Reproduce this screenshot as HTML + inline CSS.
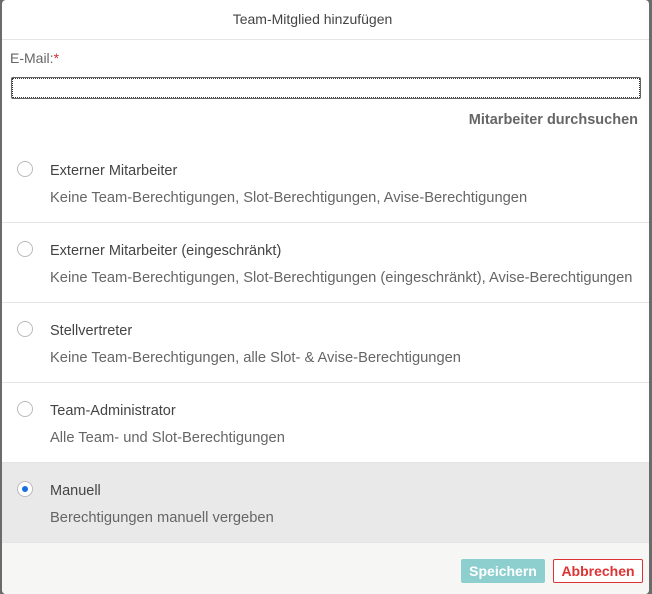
<!DOCTYPE html><html><head><style>
body{margin:0;width:652px;height:594px;background:#6b6b6b;font-family:"Liberation Sans",sans-serif;overflow:hidden}
.d{position:absolute;left:2px;top:0;width:647px;height:594px;background:#fff;border-radius:4px;overflow:hidden}
.t{position:absolute;top:0;left:0;right:0;height:39px;border-bottom:1px solid #e4e4e4;text-align:center;line-height:39px;font-size:14px;color:#444;padding-right:26px}
.lbl{position:absolute;left:8px;top:50px;font-size:14px;color:#666}
.lbl b{color:#c33;font-weight:normal}
.in{position:absolute;left:9px;top:77px;width:628px;height:20px;border:1px solid #666;outline:1px dotted #333;outline-offset:-2px;border-radius:2px}
.ms{position:absolute;right:11px;top:112px;font-size:14.5px;color:#666;font-weight:bold}
.r{position:absolute;left:0;right:0;height:79px;border-bottom:1px solid #e4e4e4}
.r.s{background:#e9e9e9}
.c{position:absolute;left:15px;top:18px;width:14px;height:14px;border:1.5px solid #bbb;border-radius:50%;background:#fff}
.s .c::after{content:"";position:absolute;left:4px;top:4px;width:6px;height:6px;border-radius:50%;background:#1a6fe0}
.a{position:absolute;left:48px;top:20px;font-size:14.5px;color:#444}
.b{position:absolute;left:48px;top:47px;font-size:14.7px;color:#666;white-space:nowrap}
.f{position:absolute;left:0;right:0;top:543px;bottom:0;background:#f6f6f4}
.btn{position:absolute;top:16px;height:24px;line-height:24px;font-size:14px;font-weight:bold;border-radius:2px;text-align:center}
</style></head><body><div class="d">
<div class="t">Team-Mitglied hinzufügen</div>
<div class="lbl">E-Mail:<b>*</b></div>
<div class="in"></div>
<div class="ms">Mitarbeiter durchsuchen</div>
<div class="r" style="top:143px"><div class="c"></div><div class="a">Externer Mitarbeiter</div><div class="b">Keine Team-Berechtigungen, Slot-Berechtigungen, Avise-Berechtigungen</div></div>
<div class="r" style="top:223px"><div class="c"></div><div class="a">Externer Mitarbeiter (eingeschränkt)</div><div class="b">Keine Team-Berechtigungen, Slot-Berechtigungen (eingeschränkt), Avise-Berechtigungen</div></div>
<div class="r" style="top:303px"><div class="c"></div><div class="a">Stellvertreter</div><div class="b">Keine Team-Berechtigungen, alle Slot- &amp; Avise-Berechtigungen</div></div>
<div class="r" style="top:383px"><div class="c"></div><div class="a">Team-Administrator</div><div class="b">Alle Team- und Slot-Berechtigungen</div></div>
<div class="r s" style="top:463px"><div class="c"></div><div class="a">Manuell</div><div class="b">Berechtigungen manuell vergeben</div></div>
<div class="f">
<div class="btn" style="left:459px;width:84px;background:#8dcfcf;color:#fff">Speichern</div>
<div class="btn" style="left:551px;width:88px;height:22px;line-height:22px;border:1px solid #d33;color:#d33;background:#fff">Abbrechen</div>
</div>
</div></body></html>
